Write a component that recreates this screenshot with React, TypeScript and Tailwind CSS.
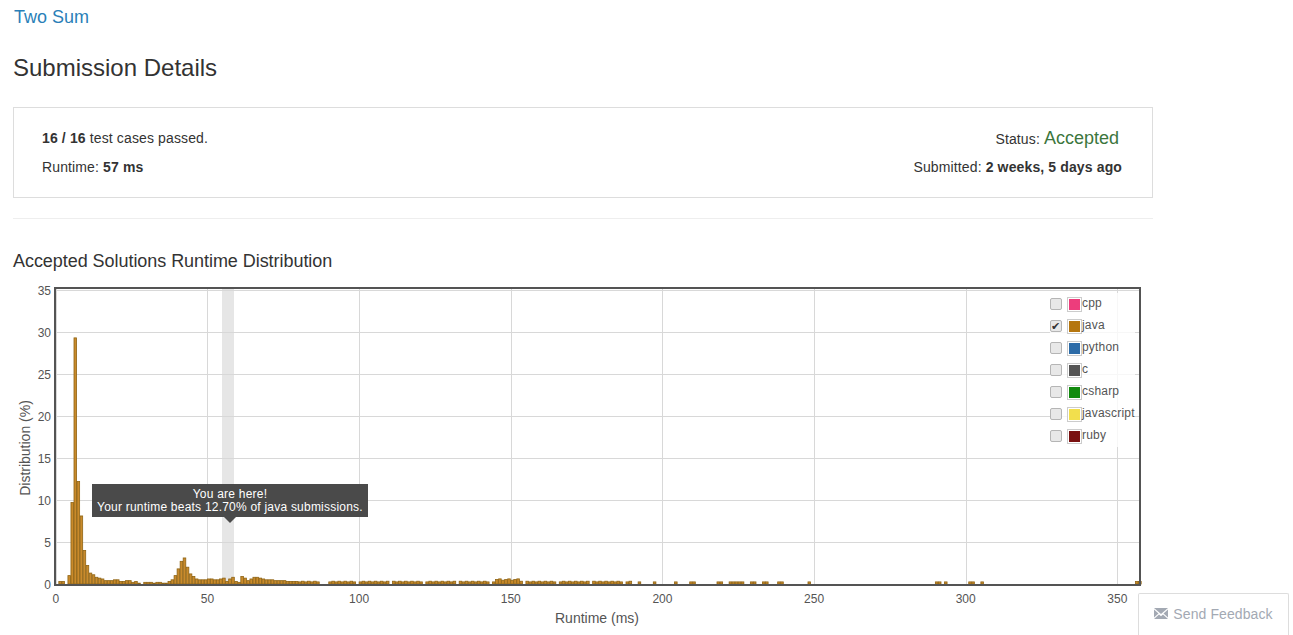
// bar heights in %, one per ms, starting at 0 ms
const head = [
  0, 0.3, 0.3, 0, 1, 9.7, 29.3, 12.2, 8.1, 4, 2.2, 1.3, 1.1, 0.8, 0.7, 0.6, 0.4, 0.4, 0.4, 0.5, 0.5, 0.3, 0.3, 0.4, 0.4, 0.2, 0.3, 0.1, 0, 0.2,
  0.2, 0.2, 0.1, 0.2, 0.2, 0.1, 0.1, 0.3, 0.5, 1, 1.8, 2.7, 3.1, 2, 1.2, 0.9, 0.6, 0.5, 0.5, 0.5, 0.6, 0.6, 0.5, 0.5, 0.6, 0.7, 0.3, 0.6, 0.8, 0.3,
  0.2, 0.9, 0.7, 0.4, 0.6, 0.8, 0.8, 0.7, 0.6, 0.5, 0.5, 0.5, 0.4, 0.4, 0.4, 0.4, 0.3, 0.3, 0.3, 0.3,
];

function valueAt(ms: number) {
  if (ms < head.length) return head[ms];
  if (ms >= 356) return 0.3;
  if (ms >= 87 && ms <= 89) return 0;
  if (ms >= 145 && ms <= 152) return 0.45 + (ms % 3) * 0.08;
  if (ms < 190) return (ms * 7) % 11 === 0 ? 0 : 0.25 + (ms % 2) * 0.08;
  const sparse = [192, 197, 204, 209, 210, 218, 219, 222, 223, 224, 225, 226, 229, 230, 233, 234, 238, 239, 248, 290, 291, 293, 301, 302, 305];
  return sparse.includes(ms) ? 0.25 : 0;
}

const bars = Array.from({ length: 358 }, (_, ms) => ({ ms, v: valueAt(ms) })).filter((b) => b.v > 0);
const xOf = (ms: number) => 42.8 + ms * 3.033;
const yOf = (v: number) => 297 - v * 8.4;

const legend = [
  { name: "cpp", color: "#ed3d7c", checked: false },
  { name: "java", color: "#b5760f", checked: true },
  { name: "python", color: "#2d6ca8", checked: false },
  { name: "c", color: "#555555", checked: false },
  { name: "csharp", color: "#118a0e", checked: false },
  { name: "javascript", color: "#f2df4d", checked: false },
  { name: "ruby", color: "#7a1010", checked: false },
];

function Chart() {
  const yTicks = [0, 5, 10, 15, 20, 25, 30, 35];
  const xTicks = [0, 50, 100, 150, 200, 250, 300, 350];
  return (
    <div className="relative h-[345px] w-[1140px]">
      <svg width="1140" height="345" className="block overflow-visible" fontFamily="Liberation Sans, Arial, sans-serif">
        <rect x="209" y="0" width="12" height="297" fill="#e6e6e6" />
        {yTicks.map((t) => (
          <g key={t}>
            <line x1="42" x2="1127" y1={yOf(t) + 0.5} y2={yOf(t) + 0.5} stroke="#d8d8d8" />
            <text x="38" y={yOf(t) + 5} textAnchor="end" fontSize="12" fill="#545454">{t}</text>
          </g>
        ))}
        {xTicks.map((t) => (
          <g key={t}>
            <line x1={Math.round(xOf(t)) + 0.5} x2={Math.round(xOf(t)) + 0.5} y1="0" y2="297" stroke="#d8d8d8" />
            <text x={xOf(t)} y="316" textAnchor="middle" fontSize="12" fill="#545454">{t}</text>
          </g>
        ))}
        {bars.map((b) => (
          <rect key={b.ms} x={xOf(b.ms)} y={yOf(b.v)} width="2.6" height={b.v * 8.4} fill="#c98a2b" stroke="#8f6414" strokeWidth="0.8" />
        ))}
        <rect x="42" y="1" width="1085" height="297" fill="none" stroke="#545454" strokeWidth="2" />
        <text x="584" y="336" textAnchor="middle" fontSize="14" fill="#545454">Runtime (ms)</text>
        <text transform="translate(17 161) rotate(-90)" textAnchor="middle" fontSize="14" fill="#545454">Distribution (%)</text>
      </svg>

      <div className="absolute left-[79px] top-[197px] w-[276px] bg-[#4a4a4a] pt-[4px] pb-[3px] text-center text-[12px] leading-[13px] tracking-[0.22px] text-white">
        <div>You are here!</div>
        <div>Your runtime beats 12.70% of java submissions.</div>
        <div className="absolute left-[132px] top-full h-0 w-0 border-x-[6px] border-t-[6px] border-x-transparent border-t-[#4a4a4a]" />
      </div>

      <div className="absolute left-[1037px] top-[6px] flex flex-col bg-white/80 text-[12px] tracking-[0.2px] text-[#545454]">
        {legend.map((l) => (
          <div key={l.name} className="flex h-[22px] items-center">
            <span className="flex h-[12px] w-[12px] items-center justify-center rounded-[2px] border border-[#b5b5b5] bg-[#e8e8e8] text-[11px] leading-none text-[#333]">
              {l.checked ? "✔" : ""}
            </span>
            <span className="ml-[5px] flex h-[15px] w-[15px] items-center justify-center border border-[#ccc] bg-white">
              <span className="block h-[11px] w-[11px]" style={{ backgroundColor: l.color }} />
            </span>
            <span className="-mt-[2px] leading-none">{l.name}</span>
          </div>
        ))}
      </div>
    </div>
  );
}

export default function App() {
  return (
    <div className="relative h-[635px] overflow-hidden bg-white font-['Liberation_Sans',Arial,sans-serif] text-[#333]">
      <div className="ml-[13px] w-[1140px]">
        <a className="ml-[1px] block pt-[7px] text-[18px] leading-[21px] text-[#2a7fb8]">Two Sum</a>
        <h1 className="mt-[26px] text-[24px] leading-[28px]">Submission Details</h1>

        <div className="mt-[25px] flex h-[91px] justify-between border border-[#ddd] pl-[28px] pr-[30px] pt-[20px] text-[14px] tracking-[0.13px]">
          <div>
            <p className="leading-[20px]"><b>16 / 16</b> test cases passed.</p>
            <p className="mt-[9px] leading-[20px]">Runtime: <b>57 ms</b></p>
          </div>
          <div className="text-right">
            <p className="mr-[3px] h-[20px] leading-[20px]">Status: <span className="text-[18px] tracking-normal text-[#3c763d]">Accepted</span></p>
            <p className="mt-[9px] leading-[20px]">Submitted: <b>2 weeks, 5 days ago</b></p>
          </div>
        </div>

        <hr className="mt-[20px] border-t border-[#eee]" />

        <h2 className="mt-[32px] text-[18px] leading-[21px] tracking-[-0.05px]">Accepted Solutions Runtime Distribution</h2>
        <div className="mt-[15px]">
          <Chart />
        </div>
      </div>

      <div className="absolute bottom-0 right-[4px] flex h-[42px] w-[151px] items-center justify-center gap-[5px] rounded-t-[2px] border border-b-0 border-[#ddd] bg-white text-[14px] tracking-[0.1px] text-[#a3a9b3]">
        <svg width="14" height="11" viewBox="0 0 14 11" fill="#a3a9b3" className="-mt-[2px]">
          <path d="M0 0h14L7 6z" />
          <path d="M0 1.5 4.5 5.5 0 9.5z" />
          <path d="M14 1.5 9.5 5.5 14 9.5z" />
          <path d="M0 11 5 6.5 7 8.3 9 6.5 14 11z" />
        </svg>
        Send Feedback
      </div>
    </div>
  );
}
